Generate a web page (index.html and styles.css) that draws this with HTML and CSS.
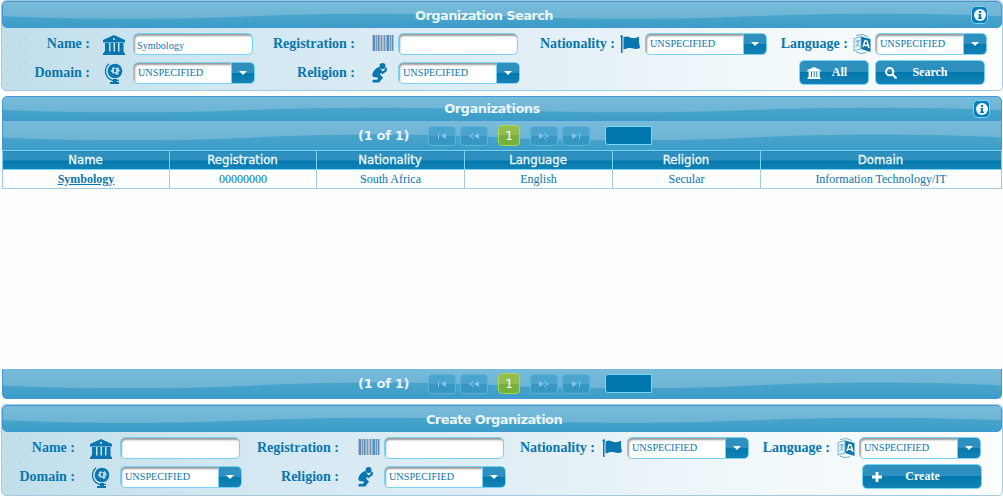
FILE: index.html
```html
<!DOCTYPE html>
<html lang="en">
<head>
<meta charset="utf-8">
<title>Organization Search</title>
<link rel="stylesheet" href="styles.css">
</head>
<body>
<svg class="defs" width="0" height="0" aria-hidden="true">
  <symbol id="building" viewBox="0 0 22 20"><path d="M11 0 0 5v2.500h22V5zM2 7h4v10H2zM7.500 7h3v10h-3zM12 7h3v10h-3zM16.500 7h4v10h-4zM1 16.500h20V18H1zM0 18h22v2H0z"/><circle cx="11" cy="4" r="1.100" fill="#cfe4ef"/></symbol>
  <symbol id="globe" viewBox="0 0 24 21"><circle cx="13" cy="8" r="7.300"/><path d="M7 .8a9.600 9.600 0 0 0 10 16.200" fill="none" stroke="currentColor" stroke-width="1.300"/><path d="M11 16h4v3h2v2H8v-2h3z"/><path d="m10 5 2-1 1 1.500L16 4l2 4-2 1 1 2-3 1-1-2-2 1-1-2-2-1 2-1z" fill="#b5d6e7"/><path d="M12 6h2v3h-2z"/></symbol>
  <symbol id="barcode" viewBox="0 0 22 16"><path fill="#b3c0cf" d="M0 0h22v16H0z"/><path fill="#5291bd" d="M1 0h2v16H1zM6 0h1v16H6zM15 0h2v16h-2zM20 0h1v16h-1z"/><path fill="#8a91ad" d="M4 0h1v16H4zM9 0h1v16H9zM12 0h1v16h-1zM18 0h1v16h-1z"/><path fill="#74bfe0" d="M7 0h1v16H7zM14 0h1v16h-1z"/></symbol>
  <symbol id="kneel" viewBox="0 0 22 20"><circle cx="10.500" cy="3" r="3"/><path d="M7.500 4C4 4.500 1 8 .3 11.500c-.3 1.700 1 2.500 2.700 2.800l3.200.4-1 2H1.500C0 17 0 19.500 1.500 19.600h5.800L11 14.500 8 11.500l.7-1.500 1.800 1.200 4.300-3.200V5l-1.800-.5-.5 2.500-2 1.500z"/></symbol>
  <symbol id="flag" viewBox="0 0 21 18"><path d="M1 1h1.500v17H1z"/><circle cx="1.700" cy="1.500" r="1.300"/><path d="M3.500 2.500c4-2.300 6 0 9 .6 2.500.5 4-1 6.500-1.400V7l1 6c-3 1.500-5 1-8 .3-3-.8-5 0-8.500 1.200z"/></symbol>
  <symbol id="translate" viewBox="0 0 18 20"><path d="M8 2.500 17.500 5v13L8 15z"/><path d="M1 4.500 8 2.500V15l-7 2z" fill="#e6f1f7" stroke="#61a8cd" stroke-width=".8"/><path d="M3 1.500Q9-1 15 2.500M3 18q5 3 10 .5M2.500 7.500l4-1M4.500 6v2M6 7q-1 4-3.500 6M3.500 9.500l3 3" fill="none" stroke="#61a8cd" stroke-width=".9"/><path d="m10 13 2-6.500 2 .5 2 7M11 11l4 .8" fill="none" stroke="#fff" stroke-width="1.400"/></symbol>
  <symbol id="info" viewBox="0 0 12 12"><circle cx="6" cy="6" r="6" fill="#f2f9fd"/><path d="M5 2h2v2H5zM4.300 5H7v3.500h1V10H4V8.500h1V6.300h-.7z" fill="#0a7bb5"/></symbol>
  <symbol id="magnify" viewBox="0 0 12 12"><circle cx="4.700" cy="4.700" r="3.600" fill="none" stroke="currentColor" stroke-width="2"/><path d="m7.500 7.500 3.300 3.300" stroke="currentColor" stroke-width="2.200" stroke-linecap="round"/></symbol>
  <symbol id="plus" viewBox="0 0 10 10"><path d="M3.600 0h2.800v3.600H10v2.800H6.400V10H3.600V6.400H0V3.600h3.600z"/></symbol>
</svg>

<section class="panel">
  <header class="bar title"><h2>Organization Search</h2><span class="info"><svg><use href="#info"/></svg></span></header>
  <div class="form search-form">
    <label>Name :</label><svg class="icon bldg"><use href="#building"/></svg><input class="field" value="Symbology">
    <label>Registration :</label><svg class="icon code"><use href="#barcode"/></svg><input class="field">
    <label>Nationality :</label><svg class="icon flag"><use href="#flag"/></svg><div class="select"><span>UNSPECIFIED</span><i></i></div>
    <label>Language :</label><svg class="icon lang"><use href="#translate"/></svg><div class="select"><span>UNSPECIFIED</span><i></i></div>
    <label>Domain :</label><svg class="icon wide"><use href="#globe"/></svg><div class="select"><span>UNSPECIFIED</span><i></i></div>
    <label>Religion :</label><svg class="icon kneel"><use href="#kneel"/></svg><div class="select"><span>UNSPECIFIED</span><i></i></div>
    <div class="actions">
      <div class="button all"><svg class="bank"><use href="#building"/></svg><span>All</span></div>
      <div class="button"><svg><use href="#magnify"/></svg><span>Search</span></div>
    </div>
  </div>
</section>

<section class="results">
  <header class="bar caption"><h2>Organizations</h2><span class="info"><svg><use href="#info"/></svg></span></header>
  <nav class="bar pager">
    <span class="count">(1 of 1)</span><span class="page"><svg viewBox="0 0 10 6"><path d="M1 0h1v6H1zM9 0v6L4 3z"/></svg></span><span class="page"><svg viewBox="0 0 10 6"><path d="M5 0 0 3l5 3V5L2 3l3-2zM10 0v6L5 3z"/></svg></span><span class="page current">1</span><span class="page"><svg viewBox="0 0 10 6"><path d="M0 0v6l5-3zM5 0l5 3-5 3V5l3-2-3-2z"/></svg></span><span class="page"><svg viewBox="0 0 10 6"><path d="M1 0v6l5-3zM8 0h1v6H8z"/></svg></span><span class="rows"></span>
  </nav>
  <table>
    <colgroup><col class="c-name"><col class="c-reg"><col class="c-nat"><col class="c-lang"><col class="c-rel"><col></colgroup>
    <thead><tr><th>Name</th><th>Registration</th><th>Nationality</th><th>Language</th><th>Religion</th><th>Domain</th></tr></thead>
    <tbody><tr><td><a>Symbology</a></td><td>00000000</td><td>South Africa</td><td>English</td><td>Secular</td><td>Information Technology/IT</td></tr></tbody>
  </table>
  <nav class="bar pager bottom">
    <span class="count">(1 of 1)</span><span class="page"><svg viewBox="0 0 10 6"><path d="M1 0h1v6H1zM9 0v6L4 3z"/></svg></span><span class="page"><svg viewBox="0 0 10 6"><path d="M5 0 0 3l5 3V5L2 3l3-2zM10 0v6L5 3z"/></svg></span><span class="page current">1</span><span class="page"><svg viewBox="0 0 10 6"><path d="M0 0v6l5-3zM5 0l5 3-5 3V5l3-2-3-2z"/></svg></span><span class="page"><svg viewBox="0 0 10 6"><path d="M1 0v6l5-3zM8 0h1v6H8z"/></svg></span><span class="rows"></span>
  </nav>
</section>

<section class="panel create">
  <header class="bar title"><h2>Create Organization</h2></header>
  <div class="form create-form">
    <label>Name :</label><svg class="icon bldg"><use href="#building"/></svg><input class="field">
    <label>Registration :</label><svg class="icon code"><use href="#barcode"/></svg><input class="field">
    <label>Nationality :</label><svg class="icon flag"><use href="#flag"/></svg><div class="select"><span>UNSPECIFIED</span><i></i></div>
    <label>Language :</label><svg class="icon lang"><use href="#translate"/></svg><div class="select"><span>UNSPECIFIED</span><i></i></div>
    <label>Domain :</label><svg class="icon wide"><use href="#globe"/></svg><div class="select"><span>UNSPECIFIED</span><i></i></div>
    <label>Religion :</label><svg class="icon kneel"><use href="#kneel"/></svg><div class="select"><span>UNSPECIFIED</span><i></i></div>
    <div class="actions">
      <div class="button"><svg><use href="#plus"/></svg><span>Create</span></div>
    </div>
  </div>
</section>
</body>
</html>
```
FILE: styles.css
```css
* { box-sizing: border-box; }
body { margin: 0; height: 496px; overflow: hidden; background: #fdfefe; color: #0a76b0; font-family: "Liberation Serif", "Times New Roman", serif; }
.defs { position: absolute; }
svg { fill: currentColor; display: block; }
h2 { margin: 0; font: bold 13px/16px "DejaVu Sans", Verdana, sans-serif; color: #eaf5f7; letter-spacing: -.6px; }

.panel { height: 91px; width: 1002px; margin-left: 1px; border: 1px solid #a6c9e2; border-radius: 5px;
  background: url("data:image/svg+xml,%3Csvg xmlns='http://www.w3.org/2000/svg' width='24' height='54'%3E%3Cdefs%3E%3Cpattern id='p' width='12' height='12' patternUnits='userSpaceOnUse'%3E%3Cpath fill='%2392c3da' d='M2 2h1v1H2zM8 6h1v1H8z'/%3E%3C/pattern%3E%3C/defs%3E%3Cpath fill='url(%23p)' d='M0 0h24v54H0z'/%3E%3C/svg%3E") 3px 32px no-repeat, linear-gradient(90deg, #c0dfeb 0, #cfe6f0 18%, #e0eef5 50%, #f1f8fb 75%, #fcfdfd 100%); }
.create { height: 92px; margin-top: 5px; }

/* Glossy bar with a repeating wave along its middle */
.bar { display: flex; align-items: center; justify-content: center; border: 1px solid #4297d7; background-color: #75b9d8;
  background-image: url("data:image/svg+xml,%3Csvg xmlns='http://www.w3.org/2000/svg' width='500' height='30' preserveAspectRatio='none' viewBox='0 0 500 30'%3E%3Cdefs%3E%3ClinearGradient id='a' x2='0' y2='1'%3E%3Cstop stop-color='%2378bbd9'/%3E%3Cstop offset='1' stop-color='%2366b0d3'/%3E%3C/linearGradient%3E%3ClinearGradient id='b' x2='0' y2='1'%3E%3Cstop stop-color='%2348a4cc'/%3E%3Cstop offset='1' stop-color='%233d9dc8'/%3E%3C/linearGradient%3E%3C/defs%3E%3Cpath fill='url(%23a)' d='M0 0h500v30H0z'/%3E%3Cpath fill='url(%23b)' d='M0 17C75 21 175 21 250 17S425 13 500 17V30H0z'/%3E%3C/svg%3E"); background-size: 500px 100%; background-repeat: repeat-x; }
.title { position: relative; height: 27px; border-radius: 5px; padding-top: 2px; width: 1000px; }
.title h2 { margin-left: -36px; }
.info { position: absolute; right: 14px; top: 4px; width: 17px; height: 18px; display: grid; place-items: center; border: 1px solid #77d5f7; border-radius: 5px; background: #087db8; }
.title .info { right: 13px; }
.info svg { width: 12px; height: 12px; }
.create h2 { margin-left: -16px; }

.form { display: grid; grid-template-rows: 22px 22px; row-gap: 7px; padding-top: 5px; }
.search-form { grid-template-columns: 88px 43px 122px 100px 43px 122px 95px 30px 122px 81px 27px 112px; }
.create-form { grid-template-columns: 73px 45px 122px 97px 45px 122px 89px 32px 122px 81px 29px 122px; }
label { justify-self: end; font-weight: bold; font-size: 14px; line-height: 21px; white-space: nowrap; }
.icon { justify-self: end; align-self: center; }
.bldg { width: 22px; height: 20px; margin: 1px 8px 0 0; }
.wide { width: 24px; height: 21px; margin-right: 7px; }
.code { width: 22px; height: 16px; margin: 0 4px 2px 0; }
.kneel { width: 22px; height: 20px; margin-right: 4px; }
.flag { width: 21px; height: 18px; margin-right: 4px; }
.lang { width: 18px; height: 20px; margin-right: 4px; }
.field, .select { height: 22px; border: 1px solid #79d1f4; border-radius: 5px; background: #fff; box-shadow: inset 1px 2px 2px #999; color: #0a76b0; font: 10.2px/20px "Liberation Serif", "Times New Roman", serif; }
.field { width: 120px; padding: 2px 3px 0; }
.select { display: flex; overflow: hidden; padding-left: 4px; }
.select span { flex: 1; line-height: 19px; }
.select i { width: 23px; border-left: 1px solid #77d5f7; display: grid; place-items: center; background: linear-gradient(#2e90be 48%, #0078ae 48%, #1682b4); }
.select i::after { content: ""; border: 4px solid transparent; border-top-color: #fff; border-bottom: 0; }
.actions { grid-column: 7 / -1; display: flex; justify-content: flex-end; gap: 6px; margin: -2px 2px 0 0; height: 25px; }
.create-form .actions { margin-right: -1px; }
.button { display: flex; align-items: center; width: 110px; padding: 0 9px; color: #fff; font-weight: bold; font-size: 12px; border: 1px solid #77d5f7; border-radius: 5px; background: linear-gradient(#2e90be 48%, #0078ae 48%, #1682b4); }
.button svg { width: 12px; height: 12px; }
.button .bank { width: 14px; height: 12px; margin-left: -2px; }
.button span { flex: 1; text-align: center; padding-right: 12px; }
.button.all span { padding: 0 1px 0 0; }
.button.all { width: 70px; }
.create-form .button { width: 120px; }
.create-form .button svg { width: 10px; height: 10px; }
.create-form .button span { padding-right: 9px; }

.results { width: 1000px; margin: 5px 0 0 2px; }
.caption { position: relative; height: 25px; border-radius: 5px 5px 0 0; }
.caption h2 { margin-left: -20px; letter-spacing: -.5px; }
.caption .info { right: 11px; top: 3px; }
.pager { height: 29px; border-bottom: 0; border-top: 0; justify-content: flex-start; padding-left: 355px; }
.count { width: 70px; font: bold 13px "DejaVu Sans", Verdana, sans-serif; color: #eaf5f7; letter-spacing: -.3px; }
.page { width: 28px; height: 20px; margin-right: 4px; display: grid; place-items: center; border: 1px solid #5db2d8; border-radius: 4px; background: linear-gradient(#4aa4cd 50%, #3797c4 50%); color: #87c5e1; font: 12px "DejaVu Sans", Verdana, sans-serif; }
.page svg { width: 10px; height: 6px; }
.current { width: 22px; height: 21px; margin: 0 10px 0 6px; border-color: #a4d65a; background: linear-gradient(#93be4e 50%, #77b13d 50%); color: #fff; }
.rows { width: 47px; height: 19px; margin-left: 11px; border: 1px solid #77d5f7; border-radius: 3px 0 0 3px; background: #0078ae; }
table { width: 1000px; border-collapse: collapse; table-layout: fixed; }
.c-name { width: 167px; }
.c-reg { width: 147px; }
.c-nat, .c-lang, .c-rel { width: 148px; }
th { height: 19px; padding: 0 1px 0 0; border: 1px solid #77d5f7; background: linear-gradient(#2e90be 50%, #0078ae 50%, #1682b4); color: #f2fafc; font: 11.7px/17px "DejaVu Sans", Verdana, sans-serif; -webkit-text-stroke: .3px #f2fafc; }
td { height: 19px; padding: 0; border: 1px solid #a6c9e2; text-align: center; font-size: 12px; line-height: 17px; }
td a { font-weight: bold; text-decoration: underline; }
.bottom { height: 30px; margin-top: 180px; border-bottom: 1px solid #4297d7; border-radius: 0 0 5px 5px; }
```
